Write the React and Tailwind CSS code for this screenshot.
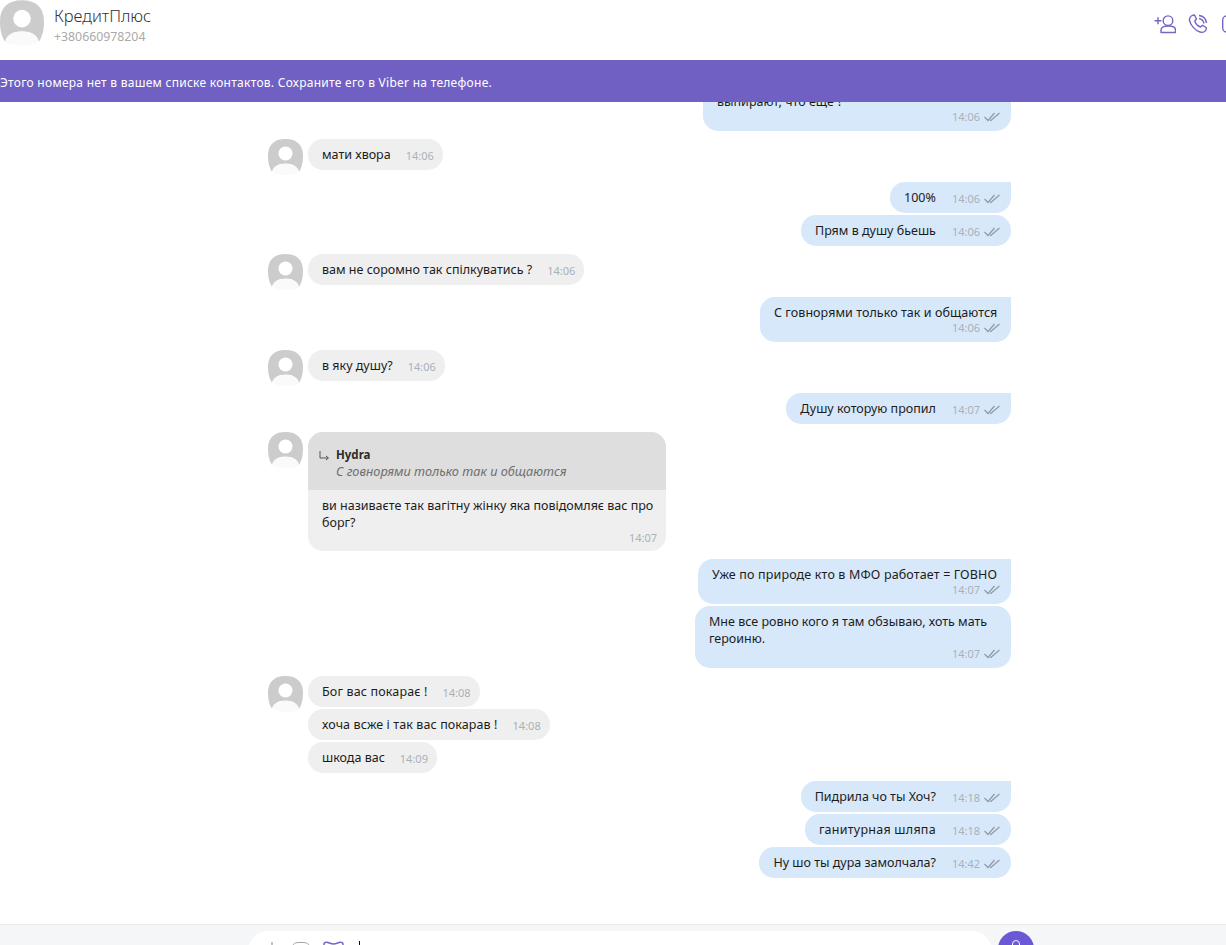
const font = { fontFamily: '"Noto Sans", "Open Sans", sans-serif' }

function Avatar({ className }) {
  return (
    <svg className={className} viewBox="0 0 35 36" fill="none">
      <path d="M17.5 0C29 0 35 6 35 17C35 24 33.5 29 31 33C29.5 27.5 25 24.5 17.5 24.5C10 24.5 5.5 27.5 4 33C1.5 29 0 24 0 17C0 6 6 0 17.5 0Z" fill="#cccccc" />
      <circle cx="17.5" cy="14.5" r="7" fill="#ffffff" />
      <path d="M4 33C5.5 27.5 10 25 17.5 25C25 25 29.5 27.5 31 33C27 35.5 22 36 17.5 36C13 36 8 35.5 4 33Z" fill="#fafafa" />
    </svg>
  )
}

function Checks() {
  return (
    <svg className="w-[16px] h-[10px] shrink-0" viewBox="0 0 16 10" fill="none" stroke="#8e9aa6" strokeWidth="1.2">
      <path d="M0.5 5L4 8.5L10.5 1" />
      <path d="M6 8L6.8 8.5L15.5 1" />
    </svg>
  )
}

function Time({ children }) {
  return <span className="text-[11px] leading-[14px] text-[#a9b1b9] whitespace-nowrap">{children}</span>
}

function Received({ text, time, avatar, mt = 'mt-[2px]', spacing = '' }) {
  return (
    <div className={`flex items-start h-[31px] ${mt}`}>
      {avatar ? <Avatar className="w-[35px] h-[36px] shrink-0" /> : <div className="w-[35px] shrink-0" />}
      <div className="ml-[5px] h-[31px] pl-[14px] pr-[9px] flex items-center gap-[15px] bg-[#efefef] rounded-[15px]">
        <span className={`text-[12.5px] leading-[17px] text-[#1c1c1c] whitespace-nowrap ${spacing}`}>{text}</span>
        <span className="pt-[2px] flex"><Time>{time}</Time></span>
      </div>
    </div>
  )
}

function Sent({ text, time, mt = 'mt-[2px]', square, spacing = '' }) {
  return (
    <div className={`flex justify-end ${mt}`}>
      <div className={`h-[31px] pl-[14px] pr-[11px] flex items-center gap-[16px] bg-[#d7e8fa] rounded-[15px] ${square ? 'rounded-tr-none' : ''}`}>
        <span className={`text-[12.5px] leading-[17px] text-[#1c1c1c] whitespace-nowrap ${spacing}`}>{text}</span>
        <span className="pt-[2px] flex items-center gap-[4px]"><Time>{time}</Time><Checks /></span>
      </div>
    </div>
  )
}

function SentLong({ lines, time, width, mt = 'mt-[2px]', square, spacing = '' }) {
  return (
    <div className={`flex justify-end ${mt}`}>
      <div className={`${width} pt-[7px] pb-[7px] pl-[14px] pr-[11px] bg-[#d7e8fa] rounded-[15px] ${square ? 'rounded-tr-none' : ''}`}>
        {lines.map((line) => (
          <div key={line} className={`text-[12.5px] leading-[17px] text-[#1c1c1c] whitespace-nowrap ${spacing}`}>{line}</div>
        ))}
        <div className="flex justify-end items-center gap-[4px]"><Time>{time}</Time><Checks /></div>
      </div>
    </div>
  )
}

function Reply() {
  return (
    <div className="flex items-start mt-[8px]">
      <Avatar className="w-[35px] h-[36px] shrink-0" />
      <div className="ml-[5px] w-[358px] bg-[#efefef] rounded-[15px] overflow-hidden">
        <div className="h-[58px] bg-[#dedede] pt-[14px] pl-[10px] flex">
          <svg className="w-[12px] h-[12px] mt-[4px] shrink-0" viewBox="0 0 12 12" fill="none" stroke="#555" strokeWidth="1">
            <path d="M2 1V8H10M8 6L10.5 8L8 10" />
          </svg>
          <div className="ml-[6px]">
            <div className="text-[11.5px] leading-[17px] font-bold text-[#2b2b2b]">Hydra</div>
            <div className="text-[12.7px] leading-[17px] italic text-[#6e6e6e]">С говнорями только так и общаются</div>
          </div>
        </div>
        <div className="pt-[7px] pb-[6px] pl-[14px] pr-[9px]">
          <div className="text-[12.5px] leading-[17px] text-[#1c1c1c] whitespace-nowrap">ви називаєте так вагітну жінку яка повідомляє вас про</div>
          <div className="text-[12.5px] leading-[17px] text-[#1c1c1c]">борг?</div>
          <div className="flex justify-end"><Time>14:07</Time></div>
        </div>
      </div>
    </div>
  )
}

export default function App() {
  return (
    <div className="h-[945px] w-[1226px] flex flex-col overflow-hidden bg-white" style={font}>
      {/* Header */}
      <div className="h-[60px] shrink-0 flex items-start overflow-hidden">
        <Avatar className="w-[44px] h-[46px] shrink-0" />
        <div className="ml-[10px] pt-[5px]">
          <div className="text-[16.5px] leading-[21px] font-light text-[#333333]">КредитПлюс</div>
          <div className="text-[12.3px] leading-[18px] mt-[2px] text-[#aaaaaa]">+380660978204</div>
        </div>
        <div className="ml-auto pt-[14px] flex gap-[12px]">
          <svg className="w-[22px] h-[20px]" viewBox="0 0 22 20" fill="none" stroke="#7467c4" strokeWidth="1.4">
            <path d="M0.5 6.7H7.5M4 3.2V10.2" />
            <circle cx="14" cy="6.7" r="4.8" />
            <path d="M7 18.5V16C7 13.5 10 12 14.5 12C19 12 21.5 13.5 21.5 16V18.5H7Z" strokeLinejoin="round" />
          </svg>
          <svg className="w-[20px] h-[20px] mr-[2px]" viewBox="0 0 20 20" fill="none" stroke="#7467c4" strokeWidth="1.4">
            <path d="M4 1.5L6.5 1L8.5 5L6.8 7C7.5 9.5 9.8 12 12.5 13L14.5 11.3L18.3 13.5L18 16C17 18 14.5 18.8 12 18C7 16.5 2.5 11 1.5 6.5C1.2 4.5 2.2 2.5 4 1.5Z" strokeLinejoin="round" />
            <path d="M11 1.5C15 2 18 5 18.5 9M11 4.5C13.5 5 15.5 7 16 9.5" />
          </svg>
          <svg className="w-[20px] h-[20px] -mr-[16px]" viewBox="0 0 20 20" fill="none" stroke="#7467c4" strokeWidth="1.4">
            <rect x="0.7" y="2" width="14" height="16" rx="4" />
          </svg>
        </div>
      </div>

      {/* Banner */}
      <div className="h-[42px] shrink-0 pt-[4px] bg-[#7060c4] flex items-center text-[12px] tracking-[0.27px] text-white whitespace-nowrap">
        Этого номера нет в вашем списке контактов. Сохраните его в Viber на телефоне.
      </div>

      {/* Messages */}
      <div className="flex-1 min-h-0 overflow-hidden flex flex-col justify-end pl-[268px] pr-[215px] pb-[46px]">
        <div className="shrink-0">
          <SentLong lines={['выпирают, что еще ?']} time="14:06" width="w-[308px]" />
          <Received text="мати хвора" time="14:06" avatar mt="mt-[8px]" />
          <Sent text="100%" time="14:06" mt="mt-[12px]" square />
          <Sent text="Прям в душу бьешь" time="14:06" />
          <Received text="вам не соромно так спілкуватись ?" time="14:06" avatar mt="mt-[8px]" />
          <SentLong lines={['С говнорями только так и общаются']} time="14:06" width="w-[251px]" mt="mt-[12px]" square spacing="tracking-[0.06px]" />
          <Received text="в яку душу?" time="14:06" avatar mt="mt-[8px]" />
          <Sent text="Душу которую пропил" time="14:07" mt="mt-[12px]" square />
          <Reply />
          <SentLong lines={['Уже по природе кто в МФО работает = ГОВНО']} time="14:07" width="w-[313px]" mt="mt-[8px]" square spacing="tracking-[0.15px]" />
          <SentLong lines={['Мне все ровно кого я там обзываю, хоть мать', 'героиню.']} time="14:07" width="w-[316px]" />
          <Received text="Бог вас покарає !" time="14:08" avatar mt="mt-[8px]" spacing="tracking-[0.15px]" />
          <Received text="хоча всже і так вас покарав !" time="14:08" spacing="tracking-[0.1px]" />
          <Received text="шкода вас" time="14:09" />
          <Sent text="Пидрила чо ты Хоч?" time="14:18" mt="mt-[8px]" square />
          <Sent text="ганитурная шляпа" time="14:18" spacing="tracking-[0.25px]" />
          <Sent text="Ну шо ты дура замолчала?" time="14:42" />
        </div>
      </div>

      {/* Input */}
      <div className="h-[21px] shrink-0 border-t border-[#e9e9e9] bg-[#f4f6f7] overflow-hidden pl-[248px] pt-[6px] flex items-start">
        <div className="w-[744px] h-[40px] bg-white rounded-[20px] flex items-start pt-[11px] pl-[18px] shrink-0">
          <svg className="w-[12px] h-[12px] shrink-0" viewBox="0 0 12 12" stroke="#9a9a9a" strokeWidth="1.2"><path d="M6 0V12M0 6H12" /></svg>
          <div className="ml-[13px] w-[20px] h-[16px] border border-[#a5a5a5] rounded-[7px]" />
          <svg className="ml-[12px] -mt-[1px] w-[21px] h-[16px] shrink-0" viewBox="0 0 21 16" fill="none" stroke="#7467c4" strokeWidth="1.5">
            <path d="M1 3C1 1.5 3 1 5 1.5C7 2.2 8.5 3 10.5 3C12.5 3 14 2.2 16 1.5C18 1 20 1.5 20 3V15H1Z" />
          </svg>
          <div className="ml-[15px] -mt-[1px] w-px h-[16px] bg-[#111111]" />
        </div>
        <div className="ml-[6px] w-[36px] h-[36px] rounded-full bg-[#6a58d6] flex justify-center pt-[9px] shrink-0">
          <div className="w-[8px] h-[14px] border-[1.5px] border-white rounded-full" />
        </div>
      </div>
    </div>
  )
}
